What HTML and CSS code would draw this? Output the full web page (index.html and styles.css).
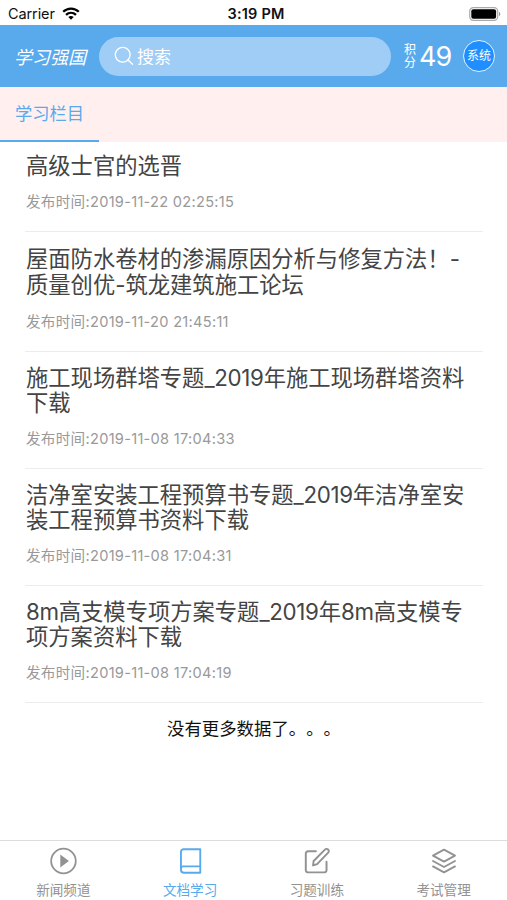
FILE: index.html
```html
<!DOCTYPE html>
<html lang="zh-CN">
<head>
    <meta charset="UTF-8">
    <meta name="viewport" content="width=device-width, initial-scale=1.0">
    <title>文档学习</title>
    <link rel="stylesheet" href="styles.css">
</head>
<body>
    <div class="status-bar">
        <div class="carrier">
            <span>Carrier</span>
            <svg width="18" height="13" viewBox="0 0 18 13" fill="none" stroke="#000" stroke-width="2.3">
                <path d="M1.2 4.8C5.6.5 12.4.5 16.8 4.8"/>
                <path d="M4 7.9c2.9-2.7 7.1-2.7 10 0"/>
                <path d="M6.3 9.9c1.6-1.3 3.8-1.3 5.4 0L9 12.7z" fill="#000" stroke="none"/>
            </svg>
        </div>
        <div class="time">3:19 PM</div>
        <div class="battery">
            <svg width="32" height="14" viewBox="0 0 32 14">
                <rect x=".7" y=".7" width="28" height="12.6" rx="3.6" fill="#fff" stroke="#aaa" stroke-width="1.2"/>
                <rect x="2.3" y="2.3" width="24.8" height="9.4" rx="2" fill="#000"/>
                <path d="M30 4.8c1.8.7 1.8 3.7 0 4.4z" fill="#999"/>
            </svg>
        </div>
    </div>

    <header class="header">
        <div class="logo">学习强国</div>
        <div class="search">
            <svg width="20" height="20" viewBox="0 0 20 20" fill="none" stroke="#fff" stroke-width="1.3" stroke-linecap="round">
                <circle cx="8.7" cy="8.7" r="7.4"/>
                <path d="M14 14l4.5 4.3"/>
            </svg>
            <span>搜索</span>
        </div>
        <div class="score">
            <span class="score-label">积分</span>
            <span class="score-num">49</span>
        </div>
        <div class="avatar">系统</div>
    </header>

    <nav class="tabs">
        <div class="tab active">学习栏目</div>
    </nav>

    <main class="list">
        <div class="item">
            <div class="title">高级士官的选晋</div>
            <div class="date">发布时间:2019-11-22 02:25:15</div>
        </div>
        <div class="item loose">
            <div class="title">屋面防水卷材的渗漏原因分析与修复方法！-<br>质量创优-筑龙建筑施工论坛</div>
            <div class="date">发布时间:2019-11-20 21:45:11</div>
        </div>
        <div class="item">
            <div class="title">施工现场群塔专题<span class="en">_2019</span>年施工现场群塔资料<br>下载</div>
            <div class="date">发布时间:2019-11-08 17:04:33</div>
        </div>
        <div class="item">
            <div class="title">洁净室安装工程预算书专题<span class="en">_2019</span>年洁净室安<br>装工程预算书资料下载</div>
            <div class="date">发布时间:2019-11-08 17:04:31</div>
        </div>
        <div class="item">
            <div class="title"><span class="en">8m</span>高支模专项方案专题<span class="en">_2019</span>年<span class="en">8m</span>高支模专<br>项方案资料下载</div>
            <div class="date">发布时间:2019-11-08 17:04:19</div>
        </div>
        <p class="no-more">没有更多数据了。。。</p>
    </main>

    <footer class="tabbar">
        <div class="tabbar-item">
            <svg width="30" height="30" viewBox="0 0 30 30" fill="none" stroke="currentColor" stroke-width="1.9">
                <circle cx="15.5" cy="15" r="13.2"/>
                <path d="M12.1 8v14l9.2-7z" fill="currentColor" stroke="none"/>
            </svg>
            <span>新闻频道</span>
        </div>
        <div class="tabbar-item active">
            <svg width="30" height="30" viewBox="0 0 30 30" fill="none" stroke="currentColor" stroke-width="2" stroke-linejoin="round">
                <path d="M26 2.4H8.2a2.9 2.9 0 0 0-2.9 2.9v19a3.3 3.3 0 0 0 3.3 3.3H26z"/>
                <path d="M5.3 23.4a2.6 2.6 0 0 1 2.6-2.6H26"/>
            </svg>
            <span>文档学习</span>
        </div>
        <div class="tabbar-item">
            <svg width="30" height="30" viewBox="0 0 30 30" fill="none" stroke="currentColor" stroke-width="2.1" stroke-linecap="round" stroke-linejoin="round">
                <path d="M13.8 4.6H5.4A2.4 2.4 0 0 0 3 7v17.8a2.4 2.4 0 0 0 2.4 2.4h17.4a2.4 2.4 0 0 0 2.4-2.4v-9"/>
                <path d="M10.8 19.7l.6-4.7L23.5 2.8A2.4 2.4 0 0 1 27 6.1L15.1 18.3z"/>
            </svg>
            <span>习题训练</span>
        </div>
        <div class="tabbar-item">
            <svg width="30" height="30" viewBox="0 0 30 30" fill="none" stroke="currentColor" stroke-width="2" stroke-linecap="round" stroke-linejoin="round">
                <path d="M15 2.8l11.8 6.4L15 15.6 3.2 9.2z"/>
                <path d="M3.2 15L15 21.4 26.8 15"/>
                <path d="M3.2 20.8L15 27.2l11.8-6.4"/>
            </svg>
            <span>考试管理</span>
        </div>
    </footer>
</body>
</html>
```
FILE: styles.css
```css
* {
    box-sizing: border-box;
}
body {
    margin: 0;
    height: 900px;
    display: flex;
    flex-direction: column;
    overflow: hidden;
    background: #fff;
    color: #444;
    font-family: Inter, "Noto Sans CJK SC", sans-serif;
    text-spacing-trim: space-all;
}
svg {
    display: block;
}
.status-bar {
    height: 25px;
    padding: 2px 6px 0 8px;
    display: grid;
    grid-template-columns: 1fr auto 1fr;
    align-items: center;
    color: #111;
    font-size: 14.5px;
}
.carrier {
    display: flex;
    align-items: center;
    gap: 7px;
}
.carrier span {
    letter-spacing: -0.1px;
}
.time {
    padding-left: 3px;
    font-weight: 600;
    letter-spacing: 0.2px;
}
.battery {
    justify-self: end;
}
.header {
    height: 62px;
    padding: 0 12px 0 14px;
    display: flex;
    align-items: center;
    background: #59a9ed;
    color: #fff;
}
.logo {
    width: 85px;
    font-size: 18px;
    font-style: italic;
    white-space: nowrap;
}
.search {
    width: 292px;
    height: 39px;
    padding-left: 15px;
    display: flex;
    align-items: center;
    gap: 3px;
    border-radius: 20px;
    background: #9fcdf6;
    font-size: 17px;
}
.search span {
    padding-bottom: 2px;
}
.score {
    margin-left: 13px;
    display: flex;
    align-items: center;
    gap: 3px;
}
.score-label {
    width: 12px;
    font-size: 12px;
    line-height: 13px;
}
.score-num {
    font-size: 27px;
    letter-spacing: -1px;
}
.avatar {
    width: 32px;
    height: 32px;
    margin-left: auto;
    border: 1.5px solid #e4f2ff;
    border-radius: 50%;
    background: #1f8fff;
    font-size: 12px;
    line-height: 30px;
    text-align: center;
    white-space: nowrap;
}
.tabs {
    height: 55px;
    display: flex;
    background: #fff0ef;
}
.tab {
    width: 99px;
    padding-left: 15px;
    font-size: 17.3px;
    line-height: 54px;
}
.tab.active {
    color: #59a9ed;
    border-bottom: 2px solid #59a9ed;
}
.list {
    flex: 1;
    padding: 0 24px 0 25px;
}
.item {
    padding: 14px 0 19.5px 1px;
    border-bottom: 1px solid #ececec;
}
.item:first-child {
    padding-top: 11.7px;
}
.title {
    margin-bottom: 13.5px;
    font-size: 22.3px;
    line-height: 24.5px;
    white-space: nowrap;
}
.title .en {
    letter-spacing: -0.3px;
}
.loose .title {
    line-height: 26px;
}
.date {
    color: #999;
    font-size: 14.6px;
    line-height: 20px;
    letter-spacing: 0.28px;
}
.no-more {
    margin: 13px 0 0;
    color: #111;
    font-size: 17.4px;
    line-height: 26px;
    text-align: center;
}
.tabbar {
    height: 60px;
    display: flex;
    border-top: 1px solid #dcdcdc;
}
.tabbar-item {
    flex: 1;
    padding-top: 6px;
    display: flex;
    flex-direction: column;
    align-items: center;
    color: #929292;
    font-size: 13.6px;
    line-height: 20px;
}
.tabbar-item span {
    margin-top: 5px;
}
.tabbar-item.active {
    color: #59a9ed;
}
```
